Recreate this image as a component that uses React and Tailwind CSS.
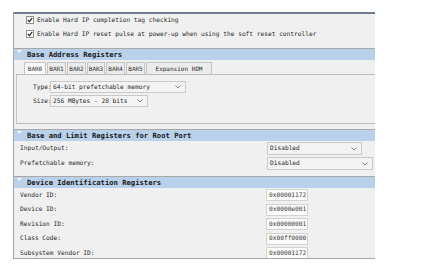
const mono = { fontFamily: '"DejaVu Sans Mono", "Liberation Mono", monospace' };

// small down-arrow used by the combo boxes
const Chevron = () => (
  <svg width="6" height="4" viewBox="0 0 6 4" className="shrink-0">
    <path d="M0.5 0.5 L3 3 L5.5 0.5" fill="none" stroke="#777" strokeWidth="0.9" />
  </svg>
);

const SectionHeader = ({ title, className = '' }) => (
  <div className={`flex items-start h-[12px] border-t border-t-[#a9a9a9] bg-[#b9d1ea] pl-[3px] ${className}`}>
    <svg width="5" height="4" viewBox="0 0 5 4" className="mt-[1px] shrink-0">
      <path d="M0 0 L5 0 L2.5 3 Z" fill="#f4f7fb" />
    </svg>
    <span className="ml-[5px] text-[7.2px] leading-[11px] font-bold text-[#1b1b1b]">{title}</span>
  </div>
);

const Combo = ({ value, className }) => (
  <div className={`flex items-center justify-between border border-[#c9c9c9] bg-[#f3f3f3] pl-[2px] pr-[4px] ${className}`}>
    <span className="text-[6.2px] leading-none text-[#2a2a2a]">{value}</span>
    <Chevron />
  </div>
);

const Check = ({ label, className = '' }) => (
  <div className={`flex items-center h-[10px] ${className}`}>
    <div className="w-[8px] h-[8px] border border-[#8f8f8f] bg-white flex items-center justify-center">
      <svg width="6" height="6" viewBox="0 0 6 6">
        <path d="M0.8 3 L2.4 4.6 L5.2 1.2" fill="none" stroke="#222" strokeWidth="1.2" />
      </svg>
    </div>
    <span className="ml-[3px] text-[6.2px] leading-none text-[#2a2a2a]">{label}</span>
  </div>
);

const tabs = [
  { name: 'BAR0', cls: 'w-[22px] bg-[#fbfbfb]' },
  { name: 'BAR1', cls: 'w-[19px] bg-[#ececec]' },
  { name: 'BAR2', cls: 'w-[19px] bg-[#ececec]' },
  { name: 'BAR3', cls: 'w-[18px] bg-[#ececec]' },
  { name: 'BAR4', cls: 'w-[19px] bg-[#ececec]' },
  { name: 'BAR5', cls: 'w-[19px] bg-[#ececec]' },
  { name: 'Expansion ROM', cls: 'w-[66px] bg-[#ececec]' },
];

const ids = [
  ['Vendor ID:', '0x00001172'],
  ['Device ID:', '0x0000e001'],
  ['Revision ID:', '0x00000001'],
  ['Class Code:', '0x00ff0000'],
  ['Subsystem Vendor ID:', '0x00001172'],
];

export default function App() {
  return (
    <div className="w-[443px] h-[268px] bg-white overflow-hidden" style={mono}>
      <div className="ml-[13px] mt-[12px] w-[362px] h-[247px] flex flex-col bg-[#f0f0f0] border-t-2 border-t-[#6e7e8f] border-l border-l-[#a6a6a6] border-b border-b-[#a6a6a6] overflow-hidden">
        {/* top check boxes */}
        <div className="pl-[12px] pt-[1px]">
          <Check label="Enable Hard IP completion tag checking" />
          <Check label="Enable Hard IP reset pulse at power-up when using the soft reset controller" className="mt-[4px]" />
        </div>

        <SectionHeader title="Base Address Registers" className="mt-[9px]" />

        {/* BAR tabs */}
        <div className="mt-[2px] ml-[2px] flex flex-col">
          <div className="flex h-[13px] pl-[8px] border-b border-b-[#bcbcbc]">
            {tabs.map((t) => (
              <div
                key={t.name}
                className={`${t.cls} mr-[1px] border border-b-0 border-[#c4c4c4] flex items-center justify-center text-[6px] leading-none text-[#2a2a2a]`}
              >
                {t.name}
              </div>
            ))}
          </div>
          <div className="h-[49px] border-l border-l-[#c4c4c4] border-b border-b-[#bcbcbc] pt-[6px] pl-[16px] flex flex-col gap-[2px]">
            <div className="flex items-center">
              <span className="w-[17px] text-[6.2px] leading-none text-[#2a2a2a]">Type:</span>
              <Combo value="64-bit prefetchable memory" className="w-[136px] h-[12px]" />
            </div>
            <div className="flex items-center">
              <span className="w-[17px] text-[6.2px] leading-none text-[#2a2a2a]">Size:</span>
              <Combo value="256 MBytes - 28 bits" className="w-[98px] h-[12px]" />
            </div>
          </div>
        </div>

        <SectionHeader title="Base and Limit Registers for Root Port" className="mt-[5px]" />

        <div className="pl-[6px] pt-[1px] flex flex-col gap-[2px]">
          <div className="flex items-center">
            <span className="w-[247px] text-[6.2px] leading-none text-[#2a2a2a]">Input/Output:</span>
            <Combo value="Disabled" className="w-[95px] h-[13px]" />
          </div>
          <div className="flex items-center">
            <span className="w-[247px] text-[6.2px] leading-none text-[#2a2a2a]">Prefetchable memory:</span>
            <Combo value="Disabled" className="w-[106px] h-[13px]" />
          </div>
        </div>

        <SectionHeader title="Device Identification Registers" className="mt-[6px]" />

        <div className="pl-[6px] pt-[1px] flex flex-col gap-[2.5px]">
          {ids.map(([label, value], i) => (
            <div key={i} className="flex items-center">
              <span className="w-[246px] text-[6.2px] leading-none text-[#2a2a2a]">{label}</span>
              <div className="w-[42px] h-[12px] border border-[#d2d2d2] bg-[#fbfbfb] flex items-center pl-[2px] text-[6.2px] leading-none text-[#3a3a3a]">
                {value}
              </div>
            </div>
          ))}
        </div>
      </div>
    </div>
  );
}
